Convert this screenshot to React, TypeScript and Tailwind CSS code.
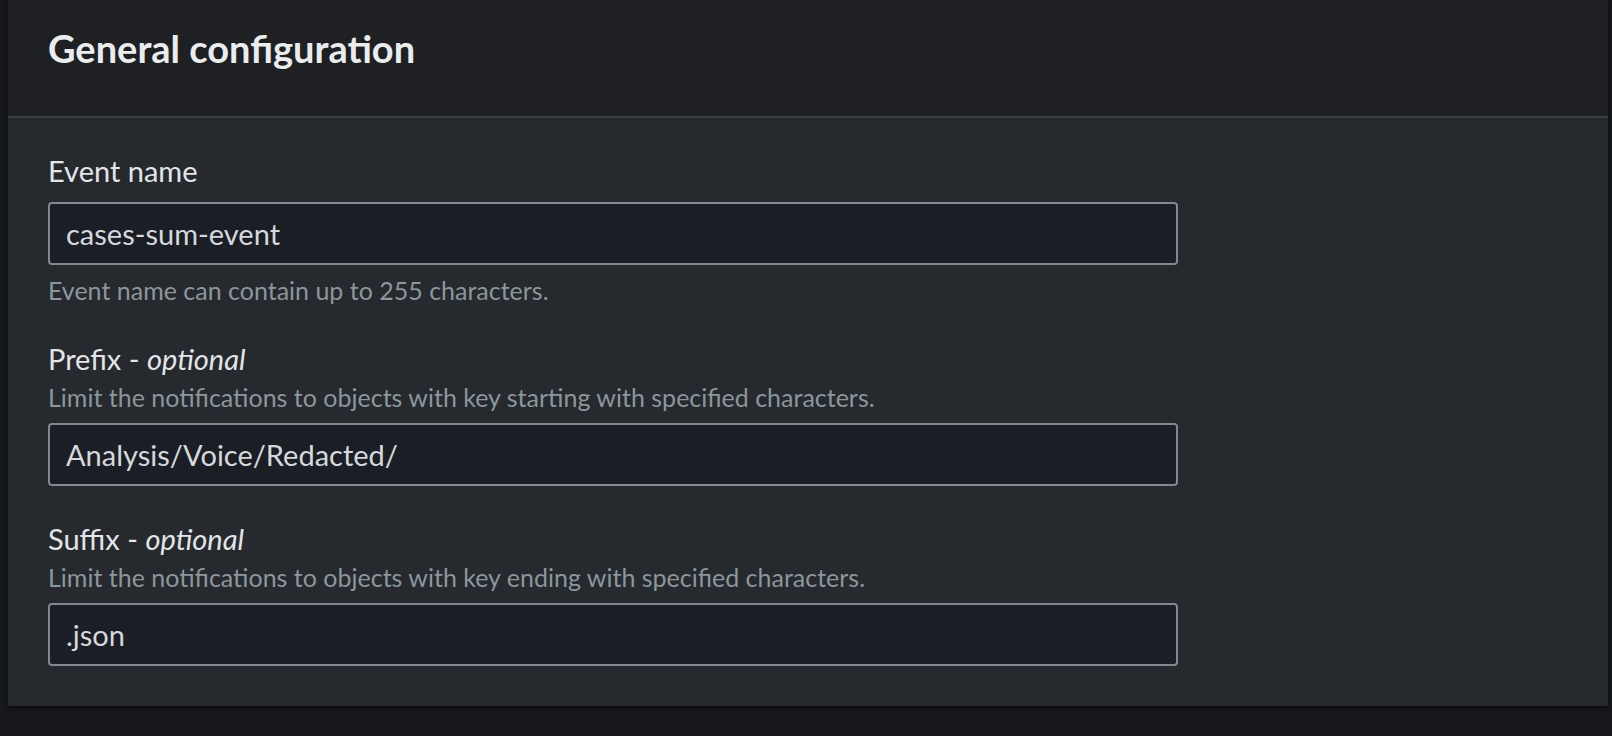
const fields = [
  {
    label: 'Event name',
    optional: false,
    description: '',
    value: 'cases-sum-event',
    hint: 'Event name can contain up to 255 characters.',
  },
  {
    label: 'Prefix',
    optional: true,
    description: 'Limit the notifications to objects with key starting with specified characters.',
    value: 'Analysis/Voice/Redacted/',
    hint: '',
  },
  {
    label: 'Suffix',
    optional: true,
    description: 'Limit the notifications to objects with key ending with specified characters.',
    value: '.json',
    hint: '',
  },
];

export default function App() {
  return (
    <div className="min-h-[736px] bg-[#17181b] pl-2 pr-1 font-['Lato',sans-serif]">
      <section className="bg-[#26292e] shadow-[0_2px_4px_rgba(0,0,0,0.5)]">
        {/* Header */}
        <div className="h-[118px] border-b-2 border-[#3b3e44] bg-[#1f2024] px-10 pt-[25px]">
          <h2 className="text-[38px] font-bold leading-[46px] text-[#eaeded]">General configuration</h2>
        </div>

        {/* Fields */}
        <div className="flex flex-col gap-[34px] px-10 pb-[40px] pt-[34px]">
          {fields.map(field => (
            <div key={field.label} className="flex flex-col">
              <label className="text-[29px] leading-[38px] text-[#e3e5e8]">
                {field.label}
                {field.optional && (
                  <>
                    {' - '}
                    <i>optional</i>
                  </>
                )}
              </label>
              {field.description && (
                <p className="mt-[3px] text-[25px] leading-[32px] text-[#8a979b]">{field.description}</p>
              )}
              <div
                className={`flex h-[63px] w-[1130px] items-center rounded-[4px] border-2 border-[#7f8a90] bg-[#1b1e24] px-4 ${
                  field.description ? 'mt-[10px]' : 'mt-3'
                }`}
              >
                <span className="text-[29px] text-[#d5d8dc]">{field.value}</span>
              </div>
              {field.hint && (
                <p className="mt-[9px] text-[25px] leading-[32px] text-[#8a979b]">{field.hint}</p>
              )}
            </div>
          ))}
        </div>
      </section>
    </div>
  );
}
